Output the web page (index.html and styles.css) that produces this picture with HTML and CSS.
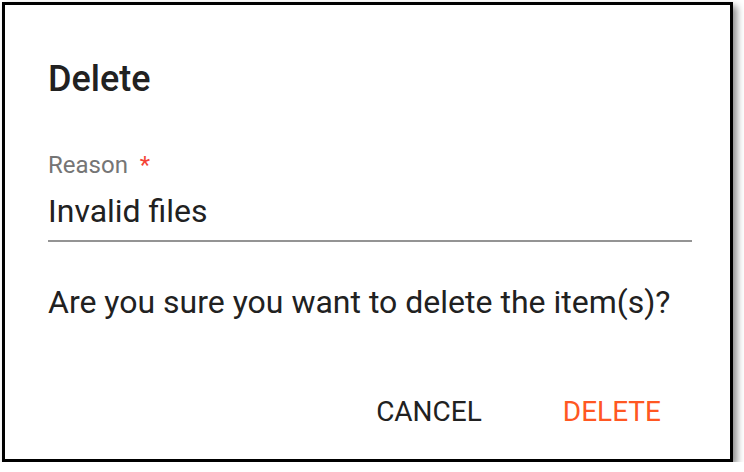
FILE: index.html
```html
<!DOCTYPE html>
<html>
<head>
<meta charset="utf-8">
<link rel="stylesheet" href="styles.css">
</head>
<body>
<div class="dialog">
  <h1 class="title">Delete</h1>
  <div class="field">
    <div class="label">Reason <span class="req">*</span></div>
    <div class="input">Invalid files</div>
  </div>
  <p class="message">Are you sure you want to delete the item(s)?</p>
  <div class="actions">
    <button class="btn btn-cancel">CANCEL</button>
    <button class="btn btn-delete">DELETE</button>
  </div>
</div>
</body>
</html>
```
FILE: styles.css
```css
html, body {
  margin: 0;
  padding: 0;
  background: #ffffff;
}
body {
  font-family: Roboto, "Liberation Sans", sans-serif;
  color: #212121;
}
.dialog {
  box-sizing: border-box;
  margin: 2px 0 0 2px;
  width: 731px;
  height: 460px;
  border: 3px solid #000;
  background: #fff;
  box-shadow: 4px 4px 7px rgba(0, 0, 0, 0.45);
  padding: 54px 38px 0 43px;
}
.title {
  margin: 0;
  font-size: 36px;
  line-height: 40px;
  font-weight: 500;
  color: #212121;
}
.field {
  margin-top: 52px;
  border-bottom: 2px solid #949494;
  padding-bottom: 9px;
}
.label {
  font-size: 24px;
  line-height: 28px;
  color: #757575;
}
.req {
  color: #f44336;
  margin-left: 6px;
}
.input {
  margin-top: 12px;
  font-size: 32px;
  line-height: 40px;
  color: #212121;
}
.message {
  margin: 40px 0 0 0;
  font-size: 32px;
  line-height: 40px;
  color: #212121;
}
.actions {
  margin-top: 72px;
  display: flex;
  justify-content: flex-end;
  gap: 49px;
  padding-right: 15px;
}
.btn {
  font-family: Roboto, "Liberation Sans", sans-serif;
  font-size: 28px;
  line-height: 36px;
  font-weight: 400;
  background: none;
  border: none;
  padding: 0 16px;
  margin: 0;
  cursor: pointer;
}
.btn-cancel {
  color: #212121;
}
.btn-delete {
  color: #ff5722;
}
```
